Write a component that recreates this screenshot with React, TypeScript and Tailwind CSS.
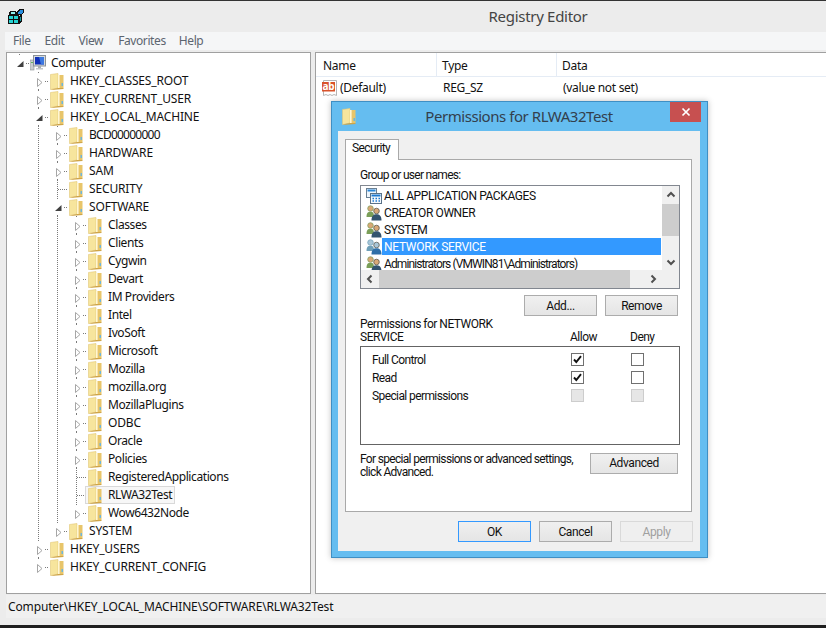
const font = { fontFamily: '"Noto Sans", "Open Sans", sans-serif' };
const dialogFont = { fontFamily: 'Roboto, "Noto Sans", sans-serif' };

type Node = { name: string; depth: number; guides: number[]; state: 'open' | 'closed' | 'leaf'; last?: boolean; selected?: boolean };

const software = ['Classes', 'Clients', 'Cygwin', 'Devart', 'IM Providers', 'Intel', 'IvoSoft', 'Microsoft', 'Mozilla', 'mozilla.org', 'MozillaPlugins', 'ODBC', 'Oracle', 'Policies'];

const tree: Node[] = [
  { name: 'HKEY_CLASSES_ROOT', depth: 1, guides: [], state: 'closed' },
  { name: 'HKEY_CURRENT_USER', depth: 1, guides: [], state: 'closed' },
  { name: 'HKEY_LOCAL_MACHINE', depth: 1, guides: [], state: 'open' },
  { name: 'BCD00000000', depth: 2, guides: [1], state: 'closed' },
  { name: 'HARDWARE', depth: 2, guides: [1], state: 'closed' },
  { name: 'SAM', depth: 2, guides: [1], state: 'closed' },
  { name: 'SECURITY', depth: 2, guides: [1], state: 'leaf' },
  { name: 'SOFTWARE', depth: 2, guides: [1], state: 'open' },
  ...software.map((name): Node => ({ name, depth: 3, guides: [1, 2], state: 'closed' })),
  { name: 'RegisteredApplications', depth: 3, guides: [1, 2], state: 'leaf' },
  { name: 'RLWA32Test', depth: 3, guides: [1, 2], state: 'leaf', selected: true },
  { name: 'Wow6432Node', depth: 3, guides: [1, 2], state: 'closed', last: true },
  { name: 'SYSTEM', depth: 2, guides: [1], state: 'closed', last: true },
  { name: 'HKEY_USERS', depth: 1, guides: [], state: 'closed' },
  { name: 'HKEY_CURRENT_CONFIG', depth: 1, guides: [], state: 'closed', last: true },
];

function Folder({ className = '' }: { className?: string }) {
  return (
    <svg width="14" height="17" viewBox="0 0 14 17" className={`shrink-0 ${className}`}>
      <path d="M0.5 1.5 L8 0.5 L8 15 L0.5 16.5 Z" fill="#f7e59d" stroke="#e3c878" strokeWidth="0.6" />
      <rect x="8" y="2" width="5.5" height="13" fill="#e8c56a" />
      <rect x="8" y="2" width="1.6" height="13" fill="#fff6d2" />
      <rect x="11.5" y="10" width="1.5" height="3" fill="#6db6dc" />
      <path d="M0.5 16.5 L8 15 L13.5 15 L13.5 16 L4 16.8 Z" fill="#cfa548" />
    </svg>
  );
}

function Glyph({ state, last }: { state: Node['state']; last?: boolean }) {
  const dots = { stroke: '#7a7a7a', strokeDasharray: '1 1', shapeRendering: 'crispEdges' as const };
  return (
    <svg width="19" height="18" viewBox="0 0 19 18" className="shrink-0">
      {state === 'leaf' ? (
        <>
          <line x1="8.5" y1="0" x2="8.5" y2={last ? 9 : 18} {...dots} />
          <line x1="9" y1="9.5" x2="19" y2="9.5" {...dots} />
        </>
      ) : (
        <>
          <line x1="8.5" y1="0" x2="8.5" y2="1" {...dots} />
          {!last && <line x1="8.5" y1="17" x2="8.5" y2="18" {...dots} />}
          <line x1="15" y1="9.5" x2="19" y2="9.5" {...dots} />
        </>
      )}
      {state === 'closed' && <path d="M7.5 6.5 L12 10.5 L7.5 14.5 Z" fill="#fff" stroke="#a6a6a6" />}
      {state === 'open' && <path d="M12.5 7 L12.5 13 L6 13 Z" fill="#404040" />}
    </svg>
  );
}

function Guide() {
  return (
    <svg width="19" height="18" viewBox="0 0 19 18" className="shrink-0">
      <line x1="8.5" y1="0" x2="8.5" y2="18" stroke="#7a7a7a" strokeDasharray="1 1" shapeRendering="crispEdges" />
    </svg>
  );
}

function ComputerIcon() {
  return (
    <svg width="16" height="16" viewBox="0 0 16 16" className="shrink-0">
      <rect x="0" y="5" width="4" height="10" fill="#c9cdd0" stroke="#8a9094" strokeWidth="0.6" />
      <rect x="1" y="7" width="2" height="1" fill="#5fb35f" />
      <rect x="3.5" y="0.5" width="12" height="10.5" fill="#d6dadd" stroke="#8b9298" />
      <rect x="5" y="2" width="9" height="7.5" fill="#1030b8" />
      <path d="M9 2 H14 V9.5 H11 Z" fill="#3c78e0" />
      <rect x="8" y="11" width="3" height="2" fill="#a8adb1" />
      <rect x="6" y="13" width="7" height="1.5" fill="#c4c8cb" />
    </svg>
  );
}

function RegeditIcon() {
  return (
    <svg width="17" height="17" viewBox="0 0 17 17" className="shrink-0" shapeRendering="crispEdges">
      <rect x="0" y="7" width="11" height="9" fill="#111" />
      <path d="M1 8 H5 V11 H1 Z M6 8 H10 V11 H6 Z M1 12 H5 V15 H1 Z M6 12 H10 V15 H6 Z" fill="#27d4d4" />
      <path d="M2 3 H8 V7 H1 V5 Z" fill="#111" />
      <path d="M3 4 H7 V6 H3 Z" fill="#8ef0ee" />
      <path d="M11 8 L14 6 V13 L11 16 Z" fill="#111" />
      <path d="M12 9 L13 8 V12 L12 13 Z" fill="#159aa0" />
      <path d="M8 4 L12 1 H16 V5 L13 7 H8 Z" fill="#111" />
      <path d="M10 4 L12 2 H15 V4 L13 6 H10 Z" fill="#2a8fe0" />
    </svg>
  );
}

function AbIcon() {
  return (
    <svg width="17" height="17" viewBox="0 0 17 17" className="shrink-0">
      <path d="M2.5 0.5 H15.5 V15.5 L13 14.5 L11 15.5 L9 14.5 L7 15.5 L5 14.5 L2.5 15.5 Z" fill="#fff" stroke="#b5b5b5" />
      <rect x="1" y="2" width="13" height="9.5" fill="#d9532b" />
      <text x="1.6" y="9.8" fontSize="10" fontWeight="700" letterSpacing="-0.3" fill="#fff" style={font}>ab</text>
    </svg>
  );
}

function UsersIcon({ tint }: { tint?: boolean }) {
  const back = tint ? '#6f9fb8' : '#7a9e58';
  const front = tint ? '#2f6fa8' : '#33536e';
  const skin = tint ? '#a9c6d8' : '#d9a877';
  return (
    <svg width="16" height="16" viewBox="0 0 16 16" className="shrink-0">
      <circle cx="4.5" cy="3.5" r="2.8" fill={skin} stroke={back} strokeWidth="0.7" />
      <path d="M0.5 12 C0.5 8 2 6.8 4.5 6.8 C7 6.8 8 8 8 12 Z" fill={back} />
      <circle cx="10.5" cy="6" r="2.8" fill={skin} stroke="#4b4b40" strokeWidth="0.7" />
      <path d="M5.5 15.5 C5.5 11 7.5 9.3 10.5 9.3 C13.5 9.3 15.5 11 15.5 15.5 Z" fill={front} />
    </svg>
  );
}

function PackagesIcon() {
  return (
    <svg width="16" height="16" viewBox="0 0 16 16" className="shrink-0">
      <rect x="0.5" y="0.5" width="10" height="9" fill="#eef5fb" stroke="#6a7f92" />
      <rect x="1.5" y="1.5" width="8" height="2" fill="#2a86d8" />
      <rect x="4.5" y="5.5" width="11" height="10" fill="#f4f8fc" stroke="#5a7288" />
      <rect x="5.5" y="6.5" width="9" height="2" fill="#1c78d0" />
      <path d="M6.5 10.5 H8 M9.5 10.5 H11 M12.5 10.5 H14 M6.5 13 H8 M9.5 13 H11 M12.5 13 H14" stroke="#1c78d0" strokeWidth="1.4" />
    </svg>
  );
}

function Chevron({ dir }: { dir: 'up' | 'down' | 'left' | 'right' }) {
  const d = { up: 'M3.5 8.5 L7 5 L10.5 8.5', down: 'M3.5 5.5 L7 9 L10.5 5.5', left: 'M8.5 3.5 L5 7 L8.5 10.5', right: 'M5.5 3.5 L9 7 L5.5 10.5' }[dir];
  return (
    <svg width="14" height="14" viewBox="0 0 14 14" className="shrink-0">
      <path d={d} fill="none" stroke="#505050" strokeWidth="2" />
    </svg>
  );
}

function Btn({ label, w = 'w-[73px]', tone = 'normal' }: { label: string; w?: string; tone?: 'normal' | 'default' | 'disabled' }) {
  const look = {
    normal: 'border-[#acacac] bg-gradient-to-b from-[#f0f0f0] to-[#e5e5e5] text-[#111]',
    default: 'border-[#3399ff] bg-gradient-to-b from-[#f0f0f0] to-[#e5e5e5] text-[#111]',
    disabled: 'border-[#d9d9d9] bg-[#efefef] text-[#a0a0a0]',
  }[tone];
  return <div className={`${w} h-[21px] shrink-0 border flex items-center justify-center text-[12px] tracking-[-0.4px] ${look}`}>{label}</div>;
}

function Check({ on, off }: { on?: boolean; off?: boolean }) {
  return (
    <div className={`w-[13px] h-[13px] shrink-0 border flex items-center justify-center ${off ? 'border-[#cdcdcd] bg-[#e6e6e6]' : 'border-[#707070] bg-white'}`}>
      {on && (
        <svg width="11" height="11" viewBox="0 0 11 11">
          <path d="M2 5.5 L4.3 8 L9 2.2" fill="none" stroke="#111" strokeWidth="1.9" />
        </svg>
      )}
    </div>
  );
}

function TreeRow({ node }: { node: Node }) {
  const upper = node.name === node.name.toUpperCase();
  const track = node.name.startsWith('BCD') ? 'tracking-[-0.75px]' : upper ? 'tracking-[-0.15px]' : 'tracking-[-0.4px]';
  return (
    <div className="flex h-[18px] items-center">
      <div className="w-[19px] shrink-0" />
      {Array.from({ length: node.depth - 1 }, (_, i) => (node.guides.includes(i + 1) ? <Guide key={i} /> : <div key={i} className="w-[19px]" />))}
      <Glyph state={node.state} last={node.last} />
      <div className={`flex h-[18px] items-center -ml-[2px] border pl-[2px] pr-[2px] ${node.selected ? 'border-[#d9d9d9] bg-[#f7f7f7]' : 'border-transparent'}`}>
        <Folder />
        <span className={`ml-[6px] whitespace-nowrap text-[12px] text-[#111] ${track}`}>{node.name}</span>
      </div>
    </div>
  );
}

const perms = [
  { name: 'Full Control', allow: true },
  { name: 'Read', allow: true },
  { name: 'Special permissions', disabled: true },
];

const accounts = [
  { name: 'ALL APPLICATION PACKAGES', pkg: true, track: 'tracking-[-0.4px]' },
  { name: 'CREATOR OWNER', track: 'tracking-[-0.4px]' },
  { name: 'SYSTEM', track: 'tracking-[-0.4px]' },
  { name: 'NETWORK SERVICE', selected: true, track: 'tracking-[-0.3px]' },
  { name: 'Administrators (VMWIN81\\Administrators)', track: 'tracking-[-0.9px]' },
];

function PermissionsDialog() {
  return (
    <div className="absolute left-[331px] top-[101px] w-[377px] h-[457px] border border-[#3f8fc4] bg-[#65bdf0] shadow-[0_0_6px_rgba(0,0,0,0.25)] flex flex-col" style={dialogFont}>
      <div className="h-[29px] shrink-0 flex items-start">
        <Folder className="ml-[10px] mt-[6px]" />
        <div className="flex-1 ml-[12px] text-center text-[15px] leading-[29px] tracking-[-0.45px] text-[#33404d]" style={font}>Permissions for RLWA32Test</div>
        <div className="w-[31px] h-[20px] mr-[6px] bg-[#c75050] flex items-center justify-center">
          <svg width="10" height="10" viewBox="0 0 10 10">
            <path d="M1.5 1.5 L8.5 8.5 M8.5 1.5 L1.5 8.5" stroke="#fff" strokeWidth="1.7" />
          </svg>
        </div>
      </div>

      <div className="ml-[6px] w-[362px] h-[420px] bg-[#f0f0f0] pt-[8px] px-[7px] flex flex-col">
        <div className="w-[54px] h-[21px] border border-b-0 border-[#a9a9a9] bg-white text-[12px] tracking-[-0.6px] text-[#111] pl-[6px] leading-[17px] relative z-10 -mb-px">Security</div>
        <div className="w-[347px] h-[353px] border border-[#a9a9a9] bg-white pl-[14px] pr-[13px] pt-[7px] flex flex-col">
          <div className="text-[12px] leading-[16px] tracking-[-0.7px] text-[#111]">Group or user names:</div>

          <div className="mt-[2px] w-[320px] h-[104px] shrink-0 border border-[#828790] flex flex-col">
            <div className="h-[84px] flex overflow-hidden">
              <div className="flex-1 pt-px overflow-hidden">
                {accounts.map((a) => (
                  <div key={a.name} className="h-[17px] flex items-center pl-[5px]">
                    {a.pkg ? <PackagesIcon /> : <UsersIcon tint={a.selected} />}
                    <div className={`flex-1 h-[17px] pl-[2px] leading-[18px] whitespace-nowrap text-[12px] ${a.track} ${a.selected ? 'bg-[#3399ff] text-white' : 'text-[#111]'}`}>{a.name}</div>
                  </div>
                ))}
              </div>
              <div className="w-[17px] shrink-0 bg-[#f0f0f0] flex flex-col items-center ml-px">
                <div className="h-[18px] flex items-center"><Chevron dir="up" /></div>
                <div className="w-full h-[32px] shrink-0 bg-[#cdcdcd]" />
                <div className="flex-1" />
                <div className="h-[17px] flex items-center"><Chevron dir="down" /></div>
              </div>
            </div>
            <div className="flex-1 bg-[#f0f0f0] flex items-center">
              <div className="w-[18px] flex justify-center"><Chevron dir="left" /></div>
              <div className="w-[251px] h-full bg-[#cdcdcd]" />
              <div className="w-[30px] flex justify-end"><Chevron dir="right" /></div>
            </div>
          </div>

          <div className="mt-[6px] flex justify-end gap-[8px]">
            <Btn label="Add..." />
            <Btn label="Remove" />
          </div>

          <div className="mt-[2px] h-[28px] flex items-end text-[12px] leading-[13px] tracking-[-0.5px] text-[#111] pb-[2px]">
            <div className="w-[209px]">Permissions for NETWORK<br />SERVICE</div>
            <div className="w-[61px] pl-px">Allow</div>
            <div>Deny</div>
          </div>

          <div className="w-[320px] h-[99px] shrink-0 border border-[#646464] pt-[3px] pl-[11px]">
            {perms.map((p) => (
              <div key={p.name} className="h-[18px] flex items-center text-[12px] tracking-[-0.6px] text-[#111]">
                <div className="w-[199px] pt-[2px]">{p.name}</div>
                <Check on={p.allow} off={p.disabled} />
                <div className="w-[47px]" />
                <Check off={p.disabled} />
              </div>
            ))}
          </div>

          <div className="mt-[8px] flex justify-between text-[12px] leading-[13px] tracking-[-0.68px] text-[#111]">
            <div className="whitespace-nowrap">For special permissions or advanced settings,<br />click Advanced.</div>
            <Btn label="Advanced" w="w-[88px]" />
          </div>
        </div>

        <div className="mt-[9px] flex justify-end gap-[8px]">
          <Btn label="OK" tone="default" />
          <Btn label="Cancel" />
          <Btn label="Apply" tone="disabled" />
        </div>
      </div>
    </div>
  );
}

export default function App() {
  return (
    <div className="relative w-[826px] h-[628px] overflow-hidden bg-[#ececec] flex flex-col" style={font}>
      <div className="h-px shrink-0 bg-[#333]" />
      <div className="h-[31px] shrink-0 flex items-center pl-[8px] pb-[1px]">
        <RegeditIcon />
        <div className="flex-1 text-center text-[15px] tracking-[-0.3px] text-[#444] pl-[225px]">Registry Editor</div>
      </div>
      <div className="h-[18px] shrink-0 ml-[5px] bg-[#f5f6f7] flex items-center text-[12px] tracking-[-0.4px] text-[#5c6570]">
        <span className="ml-[8px]">File</span>
        <span className="ml-[14px]">Edit</span>
        <span className="ml-[14px]">View</span>
        <span className="ml-[15px]">Favorites</span>
        <span className="ml-[13px]">Help</span>
      </div>

      <div className="mt-[2px] h-[542px] shrink-0 flex pl-[6px] gap-[4px]">
        <div className="w-[305px] border border-[#a0a0a0] bg-white pt-px pl-[4px] overflow-hidden">
          <div className="flex h-[18px] items-center">
            <Glyph state="open" last />
            <ComputerIcon />
            <span className="ml-[5px] text-[12px] tracking-[-0.3px] text-[#111]">Computer</span>
          </div>
          {tree.map((n) => <TreeRow key={n.name} node={n} />)}
        </div>

        <div className="flex-1 border border-r-0 border-[#a0a0a0] bg-white">
          <div className="h-[24px] flex border-b border-[#e5ecf5] text-[12px] tracking-[-0.3px] text-[#111]">
            <div className="w-[121px] pl-[7px] pt-px leading-[24px] border-r border-[#e5ecf5]">Name</div>
            <div className="w-[120px] pl-[5px] pt-px leading-[24px] border-r border-[#e5ecf5]">Type</div>
            <div className="pl-[5px] pt-px leading-[24px]">Data</div>
          </div>
          <div className="h-[22px] flex items-center text-[12px] tracking-[-0.3px] text-[#111]">
            <div className="w-[121px] pl-[5px] flex items-center">
              <AbIcon />
              <span className="ml-[2px]">(Default)</span>
            </div>
            <div className="w-[120px] pl-[6px]">REG_SZ</div>
            <div className="pl-[6px]">(value not set)</div>
          </div>
        </div>
      </div>

      <div className="mt-px h-[23px] shrink-0 ml-[6px] bg-[#f0f0f0] pl-[2px] text-[12px] leading-[23px] tracking-[-0.14px] text-[#111]">Computer\HKEY_LOCAL_MACHINE\SOFTWARE\RLWA32Test</div>
      <div className="flex-1" />
      <div className="h-[3px] shrink-0 bg-[#1f1f1f]" />

      <PermissionsDialog />
    </div>
  );
}
